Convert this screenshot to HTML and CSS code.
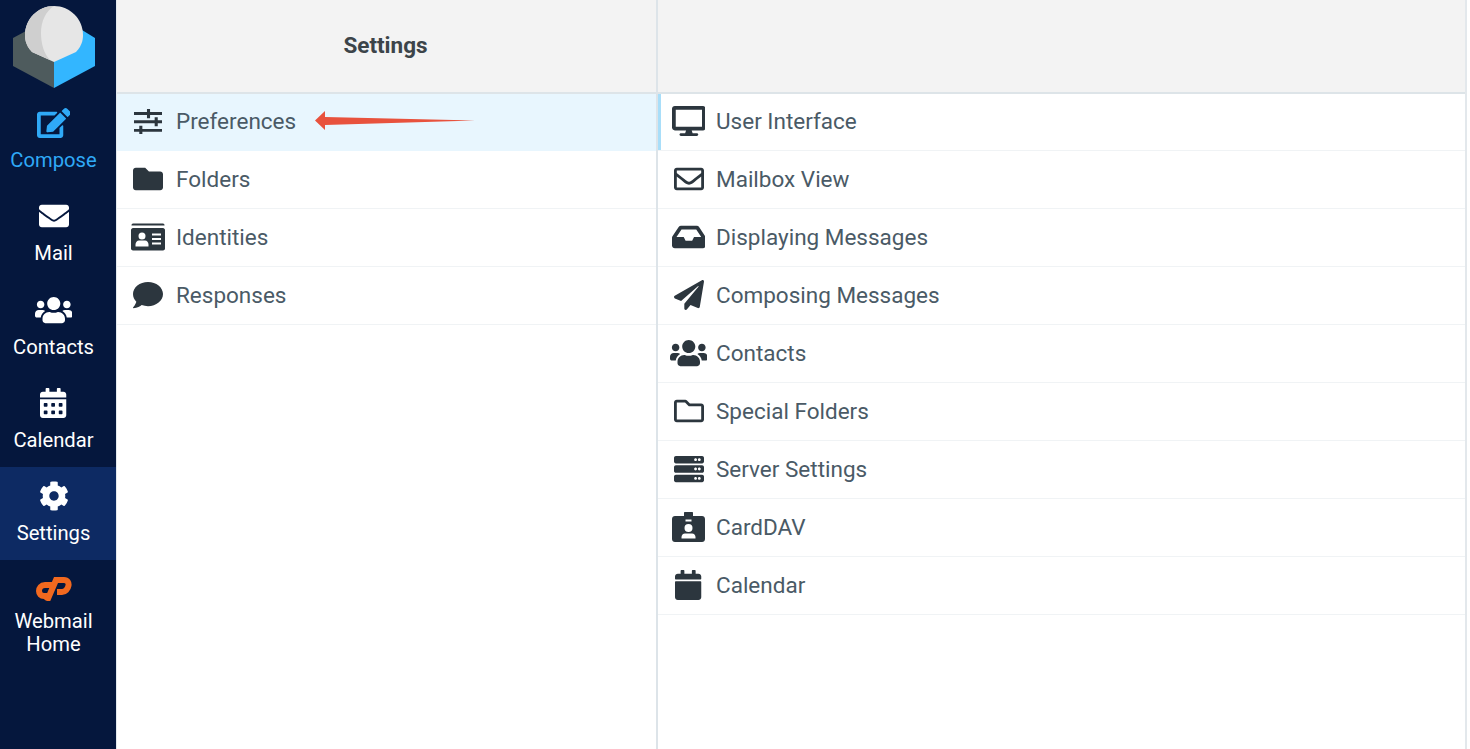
FILE: index.html
```html
<!DOCTYPE html>
<html lang="en">
<head>
<meta charset="utf-8">
<title>Settings</title>
<link rel="stylesheet" href="styles.css">
</head>
<body>
<div class="app">
  <nav class="nav">
    <div class="logo">
      <svg class="logo-svg" viewBox="0 0 116 94">
        <path fill="#33b6ff" d="M54 60 L82 30 L95 38 V66 L54 88 Z"/>
        <path fill="#4e5b5d" d="M54 60 L26 31 L13 38 V66 L54 88 Z"/>
        <path fill="#e6e6e6" d="M54 62 L32 52 C25 45 25 37 25 35 C25 19 38 6 54 6 C70 6 83 19 83 35 C83 37 83 45 76 52 Z"/>
        <path fill="#cfcfcf" d="M54 6 C38 6 25 19 25 35 C25 37 25 45 32 52 L50 60 C44 54 41 44 41 33 C41 21 46 11 54 6 Z"/>
      </svg>
    </div>
    <a class="nav-item compose">
      <svg class="nav-icon" viewBox="0 0 576 512"><path d="M402.6 83.2l90.2 90.2c3.8 3.8 3.8 10 0 13.8L274.4 405.6l-92.8 10.3c-12.4 1.4-22.9-9.1-21.5-21.5l10.3-92.8L388.8 83.2c3.8-3.8 10-3.8 13.8 0zm162-22.9l-48.8-48.8c-15.2-15.2-39.9-15.2-55.2 0l-35.4 35.4c-3.8 3.8-3.8 10 0 13.8l90.2 90.2c3.8 3.8 10 3.8 13.8 0l35.4-35.4c15.2-15.3 15.2-40 0-55.2zM384 346.2V448H64V128h229.8c3.2 0 6.2-1.3 8.5-3.5l40-40c7.6-7.6 2.2-20.5-8.5-20.5H48C21.5 64 0 85.5 0 112v352c0 26.5 21.5 48 48 48h352c26.5 0 48-21.5 48-48V306.2c0-10.7-12.9-16-20.5-8.5l-40 40c-2.2 2.3-3.5 5.3-3.5 8.5z"/></svg>
      <span>Compose</span>
    </a>
    <a class="nav-item">
      <svg class="nav-icon" viewBox="0 0 512 512"><path d="M502.3 190.8c3.9-3.1 9.7-.2 9.7 4.7V400c0 26.5-21.5 48-48 48H48c-26.5 0-48-21.5-48-48V195.6c0-5 5.7-7.8 9.7-4.7 22.4 17.4 52.1 39.5 154.1 113.6 21.1 15.4 56.7 47.8 92.2 47.6 35.7.3 72-32.8 92.3-47.6 102-74.1 131.6-96.3 154-113.7zM256 320c23.2.4 56.6-29.2 73.4-41.4 132.7-96.3 142.8-104.7 173.4-128.7 5.8-4.5 9.2-11.5 9.2-18.9v-19c0-26.5-21.5-48-48-48H48C21.5 64 0 85.5 0 112v19c0 7.4 3.4 14.3 9.2 18.9 30.6 23.9 40.7 32.4 173.4 128.7 16.8 12.2 50.2 41.8 73.4 41.4z"/></svg>
      <span>Mail</span>
    </a>
    <a class="nav-item">
      <svg class="nav-icon" viewBox="0 0 640 512"><path d="M96 224c35.3 0 64-28.7 64-64s-28.7-64-64-64-64 28.7-64 64 28.7 64 64 64zm448 0c35.3 0 64-28.7 64-64s-28.7-64-64-64-64 28.7-64 64 28.7 64 64 64zm32 32h-64c-17.6 0-33.5 7.1-45.1 18.6 40.3 22.1 68.9 62 75.1 109.4h66c17.7 0 32-14.3 32-32v-32c0-35.3-28.7-64-64-64zm-256 0c61.9 0 112-50.1 112-112S381.9 32 320 32 208 82.1 208 144s50.1 112 112 112zm76.8 32h-8.3c-20.8 10-43.9 16-68.5 16s-47.6-6-68.5-16h-8.3C179.6 288 128 339.6 128 403.2V432c0 26.5 21.5 48 48 48h288c26.5 0 48-21.5 48-48v-28.8c0-63.6-51.6-115.2-115.2-115.2zm-223.7-13.4C161.5 263.1 145.6 256 128 256H64c-35.3 0-64 28.7-64 64v32c0 17.7 14.3 32 32 32h65.9c6.3-47.4 34.9-87.3 75.2-109.4z"/></svg>
      <span>Contacts</span>
    </a>
    <a class="nav-item">
      <svg class="nav-icon" viewBox="0 0 448 512"><path d="M0 464c0 26.5 21.5 48 48 48h352c26.5 0 48-21.5 48-48V192H0v272zm320-196c0-6.6 5.4-12 12-12h40c6.6 0 12 5.4 12 12v40c0 6.6-5.4 12-12 12h-40c-6.6 0-12-5.4-12-12v-40zm0 128c0-6.6 5.4-12 12-12h40c6.6 0 12 5.4 12 12v40c0 6.6-5.4 12-12 12h-40c-6.6 0-12-5.4-12-12v-40zM192 268c0-6.6 5.4-12 12-12h40c6.6 0 12 5.4 12 12v40c0 6.6-5.4 12-12 12h-40c-6.6 0-12-5.4-12-12v-40zm0 128c0-6.6 5.4-12 12-12h40c6.6 0 12 5.4 12 12v40c0 6.6-5.4 12-12 12h-40c-6.6 0-12-5.4-12-12v-40zM64 268c0-6.6 5.4-12 12-12h40c6.6 0 12 5.4 12 12v40c0 6.6-5.4 12-12 12H76c-6.6 0-12-5.4-12-12v-40zm0 128c0-6.6 5.4-12 12-12h40c6.6 0 12 5.4 12 12v40c0 6.6-5.4 12-12 12H76c-6.6 0-12-5.4-12-12v-40zM400 64h-48V16c0-8.8-7.2-16-16-16h-32c-8.8 0-16 7.2-16 16v48H160V16c0-8.8-7.2-16-16-16h-32c-8.8 0-16 7.2-16 16v48H48C21.5 64 0 85.5 0 112v48h448v-48c0-26.5-21.5-48-48-48z"/></svg>
      <span>Calendar</span>
    </a>
    <a class="nav-item active">
      <svg class="nav-icon" viewBox="0 0 512 512"><path d="M487.4 315.7l-42.6-24.6c4.3-23.2 4.3-47 0-70.2l42.6-24.6c4.9-2.8 7.1-8.6 5.5-14-11.1-35.6-30-67.8-54.7-94.6-3.8-4.1-10-5.1-14.8-2.3L380.8 110c-17.9-15.4-38.5-27.3-60.8-35.1V25.8c0-5.6-3.9-10.5-9.4-11.7-36.7-8.2-74.3-7.8-109.2 0-5.5 1.2-9.4 6.1-9.4 11.7V75c-22.2 7.9-42.8 19.8-60.8 35.1L88.7 85.5c-4.9-2.8-11-1.9-14.8 2.3-24.7 26.7-43.6 58.9-54.7 94.6-1.7 5.4.6 11.2 5.5 14L67.3 221c-4.3 23.2-4.3 47 0 70.2l-42.6 24.6c-4.9 2.8-7.1 8.6-5.5 14 11.1 35.6 30 67.8 54.7 94.6 3.8 4.1 10 5.1 14.8 2.3l42.6-24.6c17.9 15.4 38.5 27.3 60.8 35.1v49.2c0 5.6 3.9 10.5 9.4 11.7 36.7 8.2 74.3 7.8 109.2 0 5.5-1.2 9.4-6.1 9.4-11.7v-49.2c22.2-7.9 42.8-19.8 60.8-35.1l42.6 24.6c4.9 2.8 11 1.9 14.8-2.3 24.7-26.7 43.6-58.9 54.7-94.6 1.5-5.5-.7-11.3-5.6-14.1zM256 336c-44.1 0-80-35.9-80-80s35.9-80 80-80 80 35.9 80 80-35.9 80-80 80z"/></svg>
      <span>Settings</span>
    </a>
    <a class="nav-item webmail">
      <svg class="nav-icon cp" viewBox="0 0 37 25"><path fill="none" stroke="#f2691f" stroke-width="6" d="M19 9 H10 C6 9 4 12 4 15 C4 18 6 20 9 20 H12"/><path fill="none" stroke="#f2691f" stroke-width="6" d="M12 25 L21 4 H29 C32.500 4 34 7 33.500 9.500 C33 13 30 16 27 16 H22"/></svg>
      <span>Webmail<br>Home</span>
    </a>
  </nav>

  <section class="col col-left">
    <header class="col-head">Settings</header>
    <ul class="list">
      <li class="row selected">
        <span class="ico"><svg viewBox="0 0 30 26"><path d="M0 3.200h30v3H0zM0 11.700h30v3H0zM0 20.700h30v3H0z"/><path d="M13.500 0h3.200v9.500h-3.200zM21.500 8.500h3.200v9.500h-3.200zM5.500 17.500h3.200V26H5.500z"/></svg></span>
        <span class="label">Preferences</span>
        <svg class="arrow" viewBox="0 0 160 20"><path fill="#e8523d" d="M0 9.500 10 0V6L160 9.500 10 14V19Z"/></svg>
      </li>
      <li class="row">
        <span class="ico"><svg viewBox="0 0 512 512"><path d="M464 128H272l-64-64H48C21.490 64 0 85.490 0 112v288c0 26.510 21.490 48 48 48h416c26.510 0 48-21.490 48-48V176c0-26.510-21.490-48-48-48z"/></svg></span>
        <span class="label">Folders</span>
      </li>
      <li class="row">
        <span class="ico"><svg viewBox="0 -1.500 34 30"><path d="M2 0h30a1.500 1.500 0 0 1 1.500 1.500V2H.5v-.5A1.500 1.500 0 0 1 2 0z"/><path fill-rule="evenodd" d="M2 4.500h30c1 0 2 1 2 2V25c0 1-1 2-2 2H2c-1 0-2-1-2-2V6.500c0-1 1-2 2-2zM11 9a3.500 3.500 0 1 0 0 7 3.500 3.500 0 0 0 0-7zM4.500 23h13v-2c0-2-1.500-4-3.500-4H8c-2 0-3.500 2-3.500 4zM21 10v2h9v-2zM21 14.500v2h9v-2zM21 19v2h9v-2z"/></svg></span>
        <span class="label">Identities</span>
      </li>
      <li class="row">
        <span class="ico"><svg viewBox="0 0 512 512"><path d="M256 32C114.600 32 0 125.100 0 240c0 49.600 21.400 95 57 130.700C44.500 421.100 2.700 466 2.200 466.500c-2.200 2.300-2.800 5.700-1.500 8.700S4.800 480 8 480c66.300 0 116-31.800 140.600-51.400 32.700 12.300 69 19.400 107.400 19.400 141.400 0 256-93.100 256-208S397.400 32 256 32z"/></svg></span>
        <span class="label">Responses</span>
      </li>
    </ul>
  </section>

  <section class="col col-right">
    <header class="col-head"></header>
    <ul class="list">
      <li class="row first">
        <span class="ico"><svg viewBox="0 0 576 512"><path d="M528 0H48C21.500 0 0 21.500 0 48v320c0 26.500 21.500 48 48 48h192l-16 48h-72c-13.300 0-24 10.700-24 24s10.700 24 24 24h272c13.300 0 24-10.700 24-24s-10.700-24-24-24h-72l-16-48h192c26.500 0 48-21.500 48-48V48c0-26.500-21.500-48-48-48zm-16 352H64V64h448v288z"/></svg></span>
        <span class="label">User Interface</span>
      </li>
      <li class="row">
        <span class="ico"><svg viewBox="0 0 512 512"><path d="M464 64H48C21.490 64 0 85.490 0 112v288c0 26.510 21.490 48 48 48h416c26.510 0 48-21.490 48-48V112c0-26.510-21.490-48-48-48zm0 48v40.805c-22.422 18.259-58.168 46.651-134.587 106.490-16.841 13.247-50.201 45.072-73.413 44.701-23.208.375-56.579-31.459-73.413-44.701C106.180 199.465 70.425 171.067 48 152.805V112h416zM48 400V214.398c22.914 18.251 55.409 43.862 104.938 82.646 21.857 17.205 60.134 55.186 103.062 54.955 42.717.231 80.509-37.199 103.053-54.947 49.528-38.783 82.032-64.401 104.947-82.653V400H48z"/></svg></span>
        <span class="label">Mailbox View</span>
      </li>
      <li class="row">
        <span class="ico"><svg viewBox="0 0 576 512"><path d="M567.938 243.908L462.250 85.374A48.003 48.003 0 0 0 422.311 64H153.689a48 48 0 0 0-39.938 21.374L8.062 243.908A47.994 47.994 0 0 0 0 270.533V400c0 26.510 21.490 48 48 48h480c26.510 0 48-21.490 48-48V270.533a47.994 47.994 0 0 0-8.062-26.625zM162.252 128h251.497l85.333 128H376l-32 64H232l-32-64H76.918l85.334-128z"/></svg></span>
        <span class="label">Displaying Messages</span>
      </li>
      <li class="row">
        <span class="ico"><svg viewBox="0 0 512 512"><path d="M476 3.200L12.500 270.600c-18.100 10.400-15.800 35.600 2.200 43.200L121 358.400l287.300-253.200c5.500-4.900 13.300 2.600 8.600 8.300L176 407v80.500c0 23.600 28.500 32.900 42.500 15.800L282 426l124.600 52.200c14.200 6 30.400-2.900 33-18.200l72-432C515 7.800 493.300-6.800 476 3.200z"/></svg></span>
        <span class="label">Composing Messages</span>
      </li>
      <li class="row">
        <span class="ico"><svg viewBox="0 0 640 512"><path d="M96 224c35.300 0 64-28.700 64-64s-28.700-64-64-64-64 28.700-64 64 28.700 64 64 64zm448 0c35.300 0 64-28.700 64-64s-28.700-64-64-64-64 28.700-64 64 28.700 64 64 64zm32 32h-64c-17.600 0-33.500 7.100-45.100 18.600 40.300 22.100 68.900 62 75.100 109.400h66c17.700 0 32-14.300 32-32v-32c0-35.300-28.700-64-64-64zm-256 0c61.900 0 112-50.100 112-112S381.900 32 320 32 208 82.100 208 144s50.100 112 112 112zm76.800 32h-8.300c-20.800 10-43.900 16-68.500 16s-47.600-6-68.500-16h-8.300C179.600 288 128 339.600 128 403.200V432c0 26.500 21.500 48 48 48h288c26.500 0 48-21.500 48-48v-28.800c0-63.600-51.600-115.200-115.200-115.200zm-223.700-13.400C161.500 263.100 145.600 256 128 256H64c-35.300 0-64 28.700-64 64v32c0 17.700 14.300 32 32 32h65.900c6.300-47.400 34.900-87.300 75.200-109.400z"/></svg></span>
        <span class="label">Contacts</span>
      </li>
      <li class="row">
        <span class="ico"><svg viewBox="0 0 512 512"><path d="M464 128H272l-54.630-54.630c-6-6-14.140-9.370-22.630-9.370H48C21.490 64 0 85.490 0 112v288c0 26.510 21.490 48 48 48h416c26.510 0 48-21.490 48-48V176c0-26.510-21.490-48-48-48zm0 272H48V112h140.120l54.630 54.630c6 6 14.140 9.370 22.630 9.370H464v224z"/></svg></span>
        <span class="label">Special Folders</span>
      </li>
      <li class="row">
        <span class="ico"><svg viewBox="0 0 512 512"><path d="M480 160H32c-17.673 0-32-14.327-32-32V64c0-17.673 14.327-32 32-32h448c17.673 0 32 14.327 32 32v64c0 17.673-14.327 32-32 32zm-48-88c-13.255 0-24 10.745-24 24s10.745 24 24 24 24-10.745 24-24-10.745-24-24-24zm-64 0c-13.255 0-24 10.745-24 24s10.745 24 24 24 24-10.745 24-24-10.745-24-24-24zm112 248H32c-17.673 0-32-14.327-32-32v-64c0-17.673 14.327-32 32-32h448c17.673 0 32 14.327 32 32v64c0 17.673-14.327 32-32 32zm-48-88c-13.255 0-24 10.745-24 24s10.745 24 24 24 24-10.745 24-24-10.745-24-24-24zm-64 0c-13.255 0-24 10.745-24 24s10.745 24 24 24 24-10.745 24-24-10.745-24-24-24zm112 248H32c-17.673 0-32-14.327-32-32v-64c0-17.673 14.327-32 32-32h448c17.673 0 32 14.327 32 32v64c0 17.673-14.327 32-32 32zm-48-88c-13.255 0-24 10.745-24 24s10.745 24 24 24 24-10.745 24-24-10.745-24-24-24zm-64 0c-13.255 0-24 10.745-24 24s10.745 24 24 24 24-10.745 24-24-10.745-24-24-24z"/></svg></span>
        <span class="label">Server Settings</span>
      </li>
      <li class="row">
        <span class="ico"><svg viewBox="0 0 33 30"><path fill-rule="evenodd" d="M13 0h7c.8 0 1 .5 1 1v3h9c1.700 0 3 1.300 3 3v20c0 1.700-1.300 3-3 3H3c-1.700 0-3-1.300-3-3V7c0-1.700 1.300-3 3-3h9V1c0-.5.2-1 1-1zM13.500 7.500v2h6v-2zM16.500 12a4 4 0 1 0 0 8 4 4 0 0 0 0-8zM9.500 26.500h14v-1.500c0-1.800-1.500-3.500-3.500-3.500h-7c-2 0-3.500 1.700-3.500 3.500z"/></svg></span>
        <span class="label">CardDAV</span>
      </li>
      <li class="row">
        <span class="ico"><svg viewBox="0 0 448 512"><path d="M12 192h424c6.600 0 12 5.400 12 12v260c0 26.500-21.500 48-48 48H48c-26.500 0-48-21.500-48-48V204c0-6.600 5.400-12 12-12zm436-44v-36c0-26.500-21.500-48-48-48h-48V12c0-6.600-5.400-12-12-12h-40c-6.600 0-12 5.400-12 12v52H160V12c0-6.600-5.400-12-12-12h-40c-6.600 0-12 5.400-12 12v52H48C21.500 64 0 85.500 0 112v36c0 6.600 5.400 12 12 12h424c6.600 0 12-5.400 12-12z"/></svg></span>
        <span class="label">Calendar</span>
      </li>
    </ul>
  </section>
  <div class="rest"></div>
</div>
</body>
</html>
```

FILE: styles.css
```css
* { box-sizing: border-box; }
html, body { margin: 0; height: 100%; overflow: hidden; background: #fff; }
body { font-family: Roboto, "Liberation Sans", sans-serif; }

.app { display: flex; height: 749px; width: 1470px; }

.nav { width: 116px; flex: none; background: #05173d; display: flex; flex-direction: column; }
.logo { height: 94px; flex: none; }
.logo-svg { display: block; width: 116px; height: 94px; }

.nav-item { height: 93.300px; flex: none; display: flex; flex-direction: column; align-items: center; color: #fff; fill: #fff; font-size: 20.200px; line-height: 23px; text-align: center; padding: 14px 9px 0 0; }
.nav-icon { display: block; height: 30px; flex: none; margin-bottom: 11px; }
.compose { color: #2fa9f7; fill: #2fa9f7; }
.active { background: #0d2a63; }
.cp { height: 25px; margin-bottom: 9px; }
.webmail { padding-top: 16px; }

.col { display: flex; flex-direction: column; flex: none; }
.col-left { width: 542px; border-left: 1px solid #e3e9ed; border-right: 2px solid #dde4e9; }
.col-right { width: 809px; border-right: 2px solid #e3e8ec; }
.rest { flex: 1; }

.col-head { height: 94px; flex: none; background: #f3f3f3; border-bottom: 2px solid #dde4e8; display: flex; align-items: center; justify-content: center; font-size: 22.500px; font-weight: 700; color: #3c4449; padding: 0 2px 2px 0; }

.list { list-style: none; margin: 0; padding: 0; }
.row { position: relative; height: 58px; display: flex; align-items: center; border-bottom: 1px solid #f0f3f5; padding: 0 0 2px 9px; }
.row:first-child { height: 57px; }
.col-right .row { padding-left: 8.500px; }
.selected { background: #e8f6fe; border-bottom-color: #e8f6fe; }
.first { box-shadow: inset 3px 0 0 #a9def9; }

.ico { width: 44px; height: 30px; flex: none; display: flex; align-items: center; justify-content: center; margin-right: 6px; fill: #2c363e; }
.col-right .ico { margin-right: 5.500px; }
.ico svg { display: block; height: 30px; }
.col-left .row:first-child .ico svg { height: 25px; }
.label { font-size: 22.500px; color: #4a5a66; line-height: 30px; }

.arrow { position: absolute; left: 198px; top: 17px; width: 160px; height: 20px; }
```
